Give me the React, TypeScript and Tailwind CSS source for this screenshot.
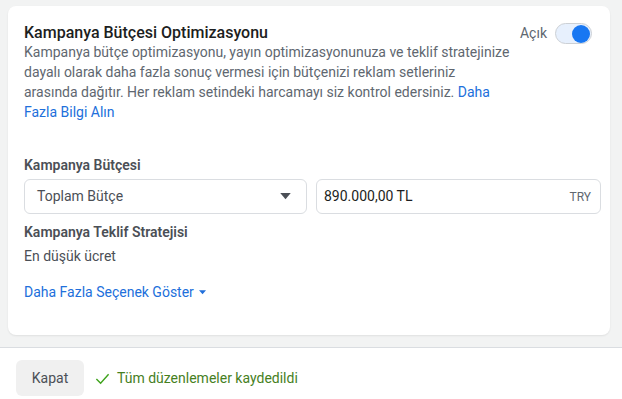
import { useState } from "react";

const CaretDown = ({ className }: { className?: string }) => (
    <svg viewBox="0 0 12 8" className={className} fill="currentColor">
        <path d="M0 0h12L6 7z" />
    </svg>
);

const App = () => {
    const [enabled, setEnabled] = useState(true);

    return (
        <div className="w-[622px] h-[399px] bg-[#f2f3f3] flex flex-col font-['Roboto',sans-serif] text-[#1c1e21] overflow-hidden">
            <div className="pt-[6px] pl-2 pr-3 flex-none">
                <div className="bg-white rounded-lg shadow-[0_1px_2px_rgba(0,0,0,0.08)] pt-[17px] pb-[31px] pl-4 pr-[9px] h-[329px]">
                    <div className="flex items-start justify-between pr-[9px]">
                        <div>
                            <h2 className="text-[16px] leading-[20px] font-medium text-[#1c1e21]">
                                Kampanya Bütçesi Optimizasyonu
                            </h2>
                            <p className="text-[14px] leading-[20px] text-[#606770] -mt-px">
                                Kampanya bütçe optimizasyonu, yayın optimizasyonunuza ve teklif stratejinize
                                <br />
                                dayalı olarak daha fazla sonuç vermesi için bütçenizi reklam setleriniz
                                <br />
                                arasında dağıtır. Her reklam setindeki harcamayı siz kontrol edersiniz.{" "}
                                <a className="text-[#216fdb]">Daha</a>
                                <br />
                                <a className="text-[#216fdb]">Fazla Bilgi Alın</a>
                            </p>
                        </div>
                        <div className="flex items-center gap-2">
                            <span className="text-[14px] text-[#606770]">Açık</span>
                            <button
                                onClick={() => setEnabled(!enabled)}
                                className={`w-[37px] h-[21px] rounded-full border border-[#ccd0d5] flex items-center px-[1px] ${enabled ? "bg-[#e7f0fd] justify-end" : "bg-[#f5f6f7] justify-start"}`}
                            >
                                <span className={`w-[18px] h-[18px] rounded-full ${enabled ? "bg-[#1877f2]" : "bg-white shadow"}`} />
                            </button>
                        </div>
                    </div>

                    <div className="mt-[34px] text-[14px] leading-[18px] font-semibold text-[#4b4f56]">Kampanya Bütçesi</div>
                    <div className="mt-[5px] flex gap-[9px]">
                        <div className="w-[283px] h-[35px] border border-[#dadde1] rounded-md flex items-center justify-between pl-3 pr-[15px]">
                            <span className="text-[14px] text-[#4b4f56]">Toplam Bütçe</span>
                            <CaretDown className="w-[11px] h-[7px] text-[#4b4f56]" />
                        </div>
                        <div className="flex-1 h-[35px] border border-[#dadde1] rounded-md flex items-center justify-between pl-[7px] pr-[9px]">
                            <span className="text-[14px] text-[#1c1e21]">890.000,00 TL</span>
                            <span className="text-[12px] text-[#606770]">TRY</span>
                        </div>
                    </div>

                    <div className="mt-[9px] text-[14px] leading-[18px] font-semibold text-[#4b4f56]">Kampanya Teklif Stratejisi</div>
                    <div className="mt-[5px] text-[14px] leading-[20px] text-[#4b4f56]">En düşük ücret</div>

                    <a className="mt-[16px] flex items-center gap-[5px] text-[14px] leading-[20px] text-[#216fdb]">
                        Daha Fazla Seçenek Göster
                        <CaretDown className="w-[7px] h-[5px]" />
                    </a>
                </div>
            </div>

            <div className="mt-[12px] flex-1 bg-white border-t border-[#dadde1] flex items-start gap-[11px] px-4 pt-[12px]">
                <button className="h-[36px] w-[68px] rounded-md bg-[#f0f0f0] text-[14px] text-[#4b4f56]">Kapat</button>
                <div className="h-[36px] flex items-center gap-[7px] text-[14px] text-[#46801e]">
                    <svg viewBox="0 0 16 16" className="w-[15px] h-[15px]" fill="none" stroke="#3ea31b" strokeWidth="1.5">
                        <path d="M1.5 8.5l4.5 4.5 8.5-9.5" />
                    </svg>
                    Tüm düzenlemeler kaydedildi
                </div>
            </div>
        </div>
    );
};

export default App;
